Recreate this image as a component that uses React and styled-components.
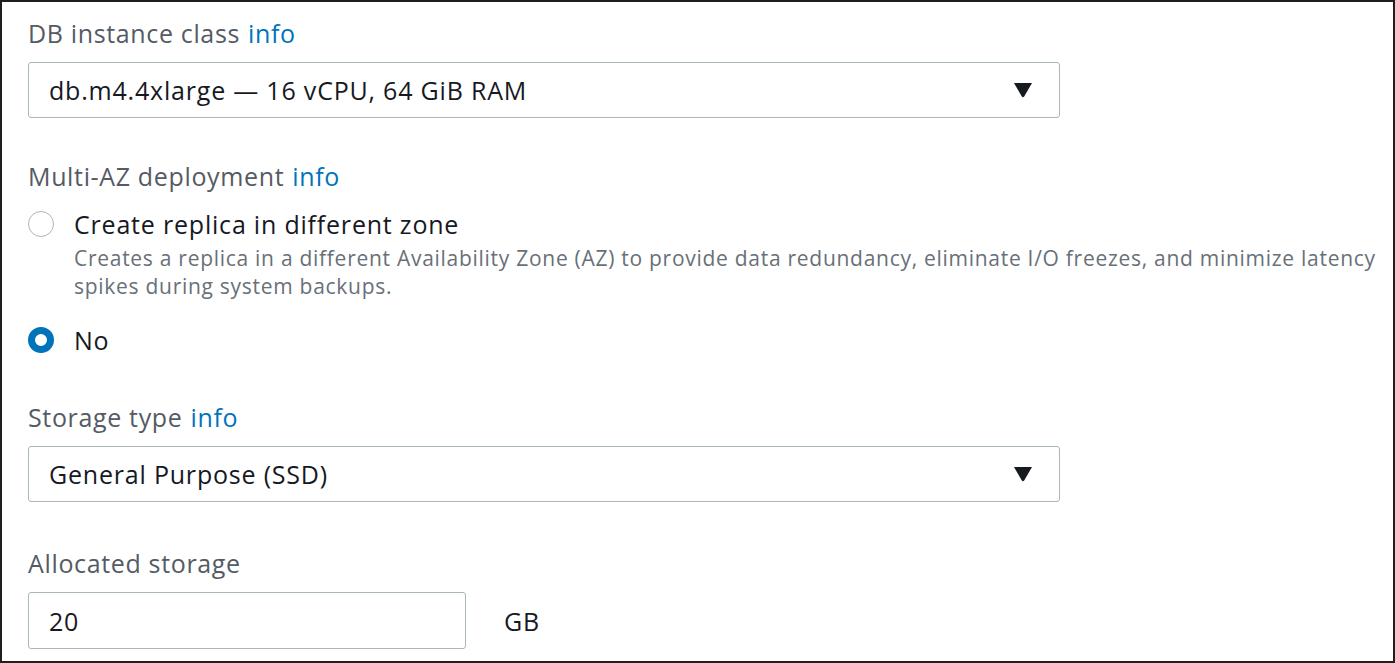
import React from "react";
import styled, { createGlobalStyle } from "styled-components";

const GlobalStyle = createGlobalStyle`
  html, body {
    margin: 0;
    padding: 0;
    background: #ffffff;
  }
  body {
    font-family: "Open Sans", "Noto Sans", sans-serif;
  }
`;

const Frame = styled.div`
  box-sizing: border-box;
  width: 1395px;
  height: 663px;
  border: 2px solid #1f1f1f;
  background: #ffffff;
  padding: 14px 26px 0 26px;
  display: flex;
  flex-direction: column;
  overflow: hidden;
`;

const Field = styled.div`
  display: flex;
  flex-direction: column;
  margin-bottom: ${(p) => p.$gap || 0}px;
`;

const Label = styled.div`
  font-size: 25px;
  letter-spacing: 0.65px;
  line-height: 34px;
  color: #545b64;
  margin-bottom: ${(p) => p.$gap || 12}px;
`;

const Info = styled.a`
  color: #0073bb;
  text-decoration: none;
  margin-left: 8px;
  cursor: pointer;
`;

const SelectBox = styled.div`
  box-sizing: border-box;
  width: 1032px;
  height: 56px;
  border: 1.5px solid #aab7b8;
  border-radius: 3px;
  display: flex;
  align-items: center;
  justify-content: space-between;
  padding: 0 26px 0 20px;
  font-size: 25px;
  letter-spacing: 0.8px;
  color: #16191f;
`;

const Caret = styled.svg`
  width: 20px;
  height: 16px;
  fill: #16191f;
`;

const RadioRow = styled.label`
  display: flex;
  align-items: flex-start;
  gap: 20px;
  margin-bottom: ${(p) => p.$gap || 0}px;
`;

const RadioDot = styled.span`
  box-sizing: border-box;
  flex: none;
  width: 26px;
  height: 26px;
  margin-top: 3px;
  border-radius: 50%;
  border: ${(p) => (p.$checked ? "7px solid #0073bb" : "1.5px solid #aab7b8")};
  background: #ffffff;
`;

const RadioText = styled.div`
  display: flex;
  flex-direction: column;
`;

const RadioTitle = styled.div`
  font-size: 25px;
  letter-spacing: 0.8px;
  line-height: 32px;
  color: #16191f;
`;

const RadioDesc = styled.div`
  font-size: 21px;
  letter-spacing: 0.72px;
  line-height: 28px;
  color: #687078;
  margin-top: 4px;
  white-space: nowrap;
`;

const InputRow = styled.div`
  display: flex;
  align-items: center;
  gap: 38px;
`;

const TextInput = styled.div`
  box-sizing: border-box;
  width: 438px;
  height: 57px;
  border: 1.5px solid #aab7b8;
  border-radius: 3px;
  display: flex;
  align-items: center;
  padding: 0 20px;
  font-size: 25px;
  letter-spacing: 0.8px;
  color: #16191f;
`;

const Unit = styled.span`
  font-size: 25px;
  letter-spacing: 0.8px;
  color: #16191f;
`;

const DownCaret = () => (
  <Caret viewBox="0 0 20 16">
    <path d="M1 1 H19 L11.2 14.6 Q10 16 8.8 14.6 Z" />
  </Caret>
);

export default function App() {
  return (
    <>
      <GlobalStyle />
      <Frame>
        <Field $gap={41}>
          <Label $gap={12}>
            DB instance class<Info>info</Info>
          </Label>
          <SelectBox>
            <span>db.m4.4xlarge — 16 vCPU, 64 GiB RAM</span>
            <DownCaret />
          </SelectBox>
        </Field>

        <Field $gap={44}>
          <Label $gap={15}>
            Multi-AZ deployment<Info>info</Info>
          </Label>
          <RadioRow $gap={24}>
            <RadioDot />
            <RadioText>
              <RadioTitle>Create replica in different zone</RadioTitle>
              <RadioDesc>
                Creates a replica in a different Availability Zone (AZ) to provide data redundancy, eliminate I/O freezes, and minimize latency
                <br />
                spikes during system backups.
              </RadioDesc>
            </RadioText>
          </RadioRow>
          <RadioRow>
            <RadioDot $checked />
            <RadioText>
              <RadioTitle>No</RadioTitle>
            </RadioText>
          </RadioRow>
        </Field>

        <Field $gap={44}>
          <Label $gap={12}>
            Storage type<Info>info</Info>
          </Label>
          <SelectBox>
            <span>General Purpose (SSD)</span>
            <DownCaret />
          </SelectBox>
        </Field>

        <Field>
          <Label $gap={12}>Allocated storage</Label>
          <InputRow>
            <TextInput>20</TextInput>
            <Unit>GB</Unit>
          </InputRow>
        </Field>
      </Frame>
    </>
  );
}
